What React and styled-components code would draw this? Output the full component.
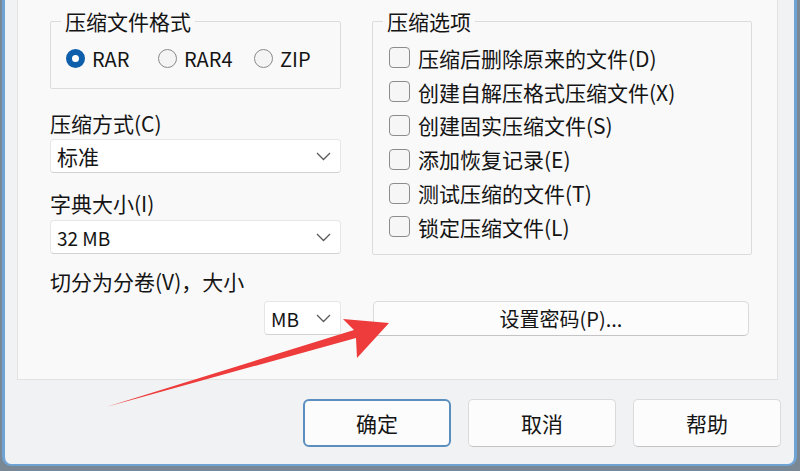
import React from 'react';
import styled, { createGlobalStyle } from 'styled-components';

const GlobalStyle = createGlobalStyle`
  html, body {
    margin: 0;
    padding: 0;
    background: #7a8794;
    font-family: "Noto Sans CJK SC", "Noto Sans", sans-serif;
    color: #141414;
  }
`

const Screen = styled.div`
  position: relative;
  width: 800px;
  height: 471px;
  overflow: hidden;
`

const Window = styled.div`
  margin-left: 2px;
  width: 795px;
  height: 466px;
  box-sizing: border-box;
  background: #f1f2f3;
  border: 3px solid #6fa3d3;
  border-top: none;
  border-bottom-width: 2px;
  border-radius: 0 0 9px 9px;
  padding: 0 13px 17px 12px;
  display: flex;
  flex-direction: column;
`

const Panel = styled.div`
  height: 380px;
  box-sizing: border-box;
  margin-right: 3px;
  background: #f9f9f9;
  border: 1px solid #e2e2e2;
  border-top: none;
  padding: 9px 25px 0 32px;
  display: grid;
  grid-template-columns: 291px 380px;
  grid-template-rows: auto 35px;
  align-content: start;
  column-gap: 31px;
  row-gap: 8px;
`

const Column = styled.div`
  display: flex;
  flex-direction: column;
`

const Group = styled.fieldset`
  margin: 0;
  padding: 0 10px ${p => p.$bottom}px;
  border: 1px solid #dcdcdc;
  border-radius: 2px;
  min-width: 0;
`

const Legend = styled.legend`
  padding: 0 4px;
  font-size: 21px;
  line-height: 24px;
`

const RadioRow = styled.div`
  margin: 8px 0 0 5px;
  height: 34px;
  display: grid;
  grid-template-columns: 92px 96px auto;
  align-items: center;
`

const RadioItem = styled.label`
  display: flex;
  align-items: center;
  gap: 7px;
  font-size: 20px;
`

const RadioDot = styled.span`
  width: 19px;
  height: 19px;
  box-sizing: border-box;
  border-radius: 50%;
  background: ${p => (p.$on ? '#ffffff' : '#f4f4f4')};
  border: ${p => (p.$on ? '6px solid #0e5fab' : '1px solid #8a8a8a')};
`

const CheckRow = styled.label`
  margin-left: 6px;
  height: 33.8px;
  display: flex;
  align-items: center;
  gap: 8px;
  font-size: 21px;
  &:first-of-type {
    margin-top: 8px;
  }
`

const CheckBox = styled.span`
  width: 21px;
  height: 21px;
  box-sizing: border-box;
  border: 1px solid #8c8c8c;
  border-radius: 4px;
  background: #f6f6f6;
`

const FieldLabel = styled.div`
  margin-top: ${p => p.$top}px;
  font-size: 21px;
  line-height: 24px;
`

const Select = styled.div`
  margin-top: ${p => p.$top || 0}px;
  width: ${p => p.$width || '100%'};
  height: 34px;
  box-sizing: border-box;
  background: #ffffff;
  border: 1px solid #e6e6e6;
  border-bottom-color: #d2d2d2;
  border-radius: 4px;
  padding: 0 9px 0 6px;
  display: flex;
  align-items: center;
  justify-content: space-between;
  font-size: ${p => (p.$latin ? 19 : 21)}px;
  justify-self: end;
`

const Button = styled.button`
  font-family: inherit;
  font-size: 20px;
  color: #141414;
  background: #fcfcfc;
  border: 1px solid #dadada;
  border-bottom-color: #c4c4c4;
  border-radius: 5px;
  padding: 0;
  box-sizing: border-box;
`

const PasswordButton = styled(Button)`
  margin-left: 1px;
  width: 376px;
  height: 35px;
`

const ButtonBar = styled.div`
  margin-top: 19px;
  display: flex;
  justify-content: flex-end;
  gap: 17px;
`

const DialogButton = styled(Button)`
  width: 148px;
  height: 48px;
  font-size: 21px;
  ${p => p.$primary && `
    border: 2px solid #5b8fbf;
    border-radius: 6px;
  `}
`

const Overlay = styled.svg`
  position: absolute;
  left: 0;
  top: 0;
  pointer-events: none;
`

const Chevron = () => (
  <svg width="15" height="9" viewBox="0 0 15 9">
    <path d="M1 1 L7.5 7.5 L14 1" fill="none" stroke="#5a5a5a" strokeWidth="1.3" />
  </svg>
)

const options = [
  '压缩后删除原来的文件(D)',
  '创建自解压格式压缩文件(X)',
  '创建固实压缩文件(S)',
  '添加恢复记录(E)',
  '测试压缩的文件(T)',
  '锁定压缩文件(L)',
]

export default function App() {
  return (
    <Screen>
      <GlobalStyle />
      <Window>
        <Panel>
          <Column>
            <Group $bottom={13}>
              <Legend>压缩文件格式</Legend>
              <RadioRow>
                <RadioItem><RadioDot $on />RAR</RadioItem>
                <RadioItem><RadioDot />RAR4</RadioItem>
                <RadioItem><RadioDot />ZIP</RadioItem>
              </RadioRow>
            </Group>
            <FieldLabel $top={22}>压缩方式(C)</FieldLabel>
            <Select $top={4}>标准<Chevron /></Select>
            <FieldLabel $top={18}>字典大小(I)</FieldLabel>
            <Select $top={5} $latin>32 MB<Chevron /></Select>
            <FieldLabel $top={15}>切分为分卷(V)，大小</FieldLabel>
          </Column>
          <Column>
            <Group $bottom={10}>
              <Legend>压缩选项</Legend>
              {options.map(text => (
                <CheckRow key={text}><CheckBox />{text}</CheckRow>
              ))}
            </Group>
          </Column>
          <Select $width="77px" $latin>MB<Chevron /></Select>
          <PasswordButton>设置密码(P)...</PasswordButton>
        </Panel>
        <ButtonBar>
          <DialogButton $primary>确定</DialogButton>
          <DialogButton>取消</DialogButton>
          <DialogButton>帮助</DialogButton>
        </ButtonBar>
      </Window>
      <Overlay width="800" height="471" viewBox="0 0 800 471">
        <polygon
          points="106,407 354,330 343,319 389,323 357,358 356,338"
          fill="#ee3b3b"
        />
      </Overlay>
    </Screen>
  )
}
